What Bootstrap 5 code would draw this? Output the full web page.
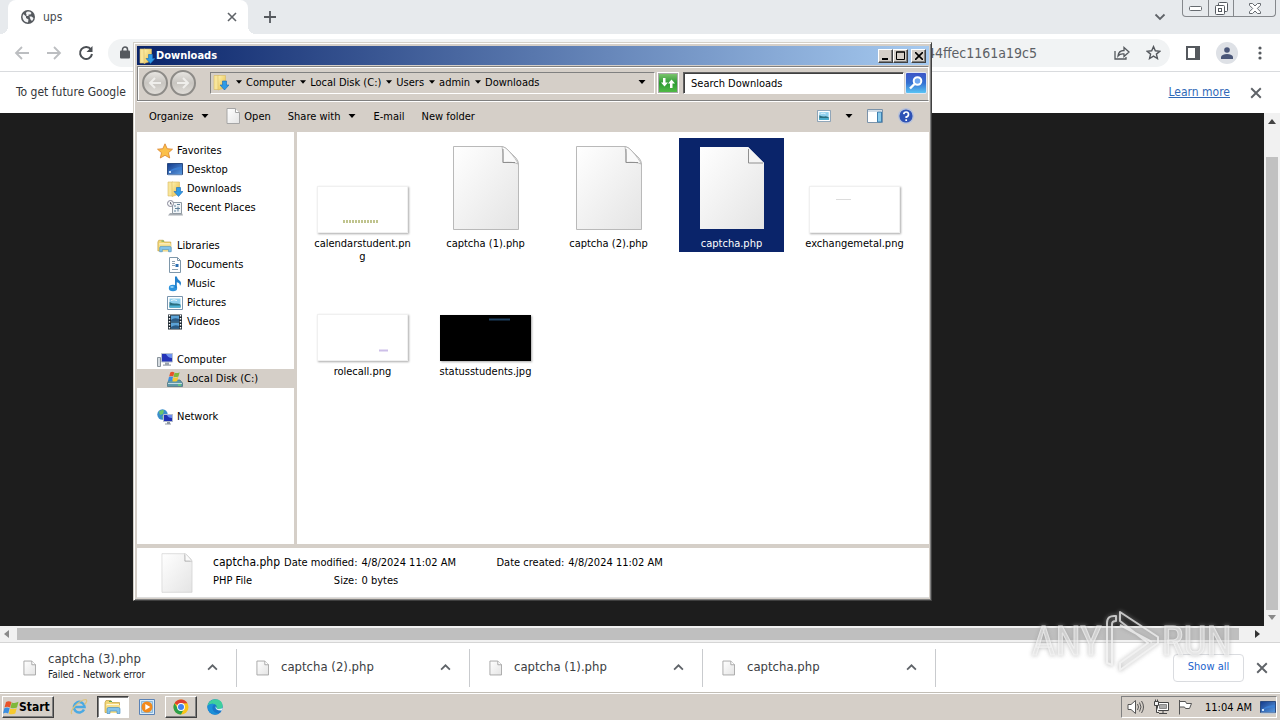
<!DOCTYPE html>
<html lang="en">
<head>
<meta charset="utf-8">
<meta name="viewport" content="width=device-width, initial-scale=1">
<title>Downloads</title>
<link rel="stylesheet" href="https://cdn.jsdelivr.net/npm/bootstrap@5.3.0/dist/css/bootstrap.min.css">
<style>
  :root { --face: #d5cfc8; --navy: #0a246a; --ink: #5f6368; }
  body { font-family: "DejaVu Sans Condensed", "Open Sans", sans-serif; font-size: 11px; line-height: 13px; color: #000; height: 100vh; overflow: hidden; }
  button { font: inherit; color: inherit; background: none; border: 0; padding: 0; }
  svg { display: block; flex: none; }
  ul { list-style: none; margin: 0; padding: 0; }

  /* browser */
  .tabstrip { height: 34px; background: #e7eaed; padding-left: 8px; }
  .tab { width: 240px; background: #fff; border-radius: 8px 8px 0 0; padding: 0 11px 0 13px; color: #45494d; font-size: 12px; position: relative; }
  .tab::before, .tab::after { content: ""; position: absolute; bottom: 0; width: 8px; height: 8px; }
  .tab::before { left: -8px; background: radial-gradient(circle at 0 0, transparent 8px, #fff 8px); }
  .tab::after { right: -8px; background: radial-gradient(circle at 100% 0, transparent 8px, #fff 8px); }
  .winbtns { height: 17px; margin-right: 4px; border: 1px solid #85888c; border-top: 0; border-radius: 0 0 4px 4px; }
  .winbtns button { width: 25px; display: grid; place-items: center; }
  .winbtns button + button { border-left: 1px solid #85888c; }
  .winbtns button:last-child { width: 42px; }
  .toolbar { height: 38px; background: #fff; border-bottom: 1px solid #d9dbde; padding: 0 14px; }
  .omnibox { height: 28px; border-radius: 14px; background: #f1f3f4; padding: 0 9px 0 12px; margin-left: 14px; }
  .url { font-size: 14px; color: #5c6065; line-height: 18px; margin: 0 77px 0 auto; }
  .avatar { width: 22px; height: 22px; border-radius: 50%; background: #dee1e6; display: grid; place-items: center; }
  .infobar { height: 41px; padding: 0 18px 0 16px; font-size: 12px; color: #333639; background: #fff; }
  .infobar a { color: #3069b8; }
  .page { background: #1d1d1d; }
  .vbar { width: 16px; background: #f1f1f1; padding: 6px 2px 6px; }
  .vthumb { flex: 1; background: #c1c1c1; margin: 33px 0 5px; align-self: stretch; }
  .hbar { height: 17px; background: #f1f1f1; border-bottom: 1px solid #d5d5d5; padding: 2px 20px 2px 4px; }
  .hthumb { flex: 1; background: #bfbfbf; height: 12px; }
  .shelf { height: 49px; background: #fff; color: #3c4043; }
  .dl { width: 233px; height: 38px; padding: 0 18px 0 19px; border-right: 1px solid #c9cbce; font-size: 13px; line-height: 16px; }
  .dl:first-child { width: 237px; padding-left: 23px; }
  .dl small { font-size: 10px; line-height: 14px; color: #202124; display: block; margin-top: 1px; }
  .dl > div { padding-bottom: 2px; }
  .showall { width: 71px; height: 28px; border: 1px solid #dadce0; border-radius: 4px; color: #1a62cc; padding-bottom: 2px; }

  /* taskbar */
  .taskbar { height: 28px; background: var(--face); border-top: 1px solid #c2beb6; box-shadow: inset 0 1px #fff; padding: 3px 3px 2px 2px; }
  .raised { border: 1px solid; border-color: #fff #404040 #404040 #fff; box-shadow: inset -1px -1px #808080; background: var(--face); }
  .sunken { border: 1px solid; border-color: #808080 #fff #fff #808080; }
  .start { width: 52px; font-weight: bold; font-size: 12px; }
  .task { width: 32px; display: grid; place-items: center; }
  .task.flat { width: 36px; }
  .start + .flat { margin-left: 7px; }
  .task.active { background: #fff; border-color: #404040 #fff #fff #404040; box-shadow: inset 1px 1px #808080; }
  .tray { padding: 0 0 0 5px; }

  /* explorer window */
  .explorer { position: absolute; left: 133px; top: 42px; width: 799px; height: 559px; background: var(--face); border: 1px solid; border-color: #d4d0c8 #404040 #404040 #d4d0c8; box-shadow: inset 1px 1px #fff, inset -1px -1px #808080; padding: 3px 2px 2px 3px; }
  .titlebar { height: 19px; background: linear-gradient(90deg, #0a246a, #a6caf0); color: #fff; font-weight: bold; padding: 0 3px 0 2px; gap: 1px; }
  .capt { width: 15px; height: 14px; display: grid; place-items: center; }
  .capt.shut { margin-left: 3px; }
  .navband { height: 35px; border: 1px solid; border-color: #808080 #fff #808080 #808080; margin-top: 1px; padding: 0 1px 1px 4px; box-shadow: inset 1px 1px #fff, 0 1px #fff; }
  .round { width: 26px; height: 26px; border-radius: 50%; border: 2px solid #8d8b87; background: linear-gradient(#e6e4e0, #c8c5c0 50%, #e0ddd8); display: grid; place-items: center; }
  .round + .round { margin-left: 2px; }
  .address { height: 22px; margin: 0 2px 0 14px; padding: 0 0 2px 2px; }
  .arrowbox { width: 15px; display: grid; place-items: center; }
  .address .arrowbox:first-of-type { margin-left: 2px; }
  .gobtn { width: 22px; height: 22px; border: 1px solid #fff; outline: 1px solid #aaa; outline-offset: -2px; background: linear-gradient(#83c873, #2c9a32 50%, #55bd48); display: grid; place-items: center; }
  .search { width: 221px; height: 22px; border: 1px solid; border-color: #606060 #fff #fff #606060; box-shadow: inset 1px 1px #404040; padding: 0 7px; margin: 0 1px 0 4px; background: #fff; border-radius: 0; font: inherit; outline: 0; }
  .search::placeholder { color: #000; opacity: 1; }
  .findbtn { width: 22px; height: 22px; border: 1px solid #e0e6f2; border-radius: 2px; background: linear-gradient(#3d55c6, #3470d2 50%, #5ac4f4); display: grid; place-items: center; }
  .cmdbar { height: 30px; padding: 0 15px 2px 12px; margin-top: 1px; gap: 17px; }
  .cmdtools { gap: 15px; }
  .viewtools { gap: 14px; margin-right: -1px; }
  .places { width: 157px; flex: none; background: #fff; padding-top: 9px; white-space: nowrap; }
  .places li { height: 19px; }
  .places a, .places a:hover { color: #000; text-decoration: none; height: 19px; gap: 4px; padding-left: 20px; }
  .places a.sub { padding-left: 30px; }
  .places a.current { background: var(--face); }
  .places ul { margin-bottom: 19px; }
  .files { background: #fff; margin-left: 3px; padding: 6px 13px; display: grid; grid-template-columns: repeat(auto-fill, 105px); grid-auto-rows: 128px; column-gap: 18px; }
  .file { min-height: 114px; padding: 0 3px 2px; text-align: center; align-self: start; word-break: break-all; }
  .file.selected { background: var(--navy); color: #fff; }
  .pic { height: 99px; padding-bottom: 6px; }
  .thumb { width: 91px; height: 47px; background: #fff; border: 1px solid #f0f0f0; box-shadow: 1px 1px 2px #aaa; margin-bottom: -2px; }
  .thumb.dark { background: #000; border-color: #000; height: 46px; }
  .details { height: 50px; background: #fff; border-bottom: 1px solid #ddd; margin-top: 4px; padding: 5px 24px; }
  .props th { font-weight: normal; text-align: right; }
  .props td, .props th { padding: 0 4px 0 0; height: 18px; vertical-align: middle; white-space: nowrap; }
  .props .name { font-size: 12px; }
  .props .val { width: 135px; }

  .watermark { position: absolute; right: 48px; bottom: 47px; pointer-events: none; opacity: .8; color: rgba(240,240,240,.6); font: 41px/38px "Roboto Condensed", "Open Sans Condensed", Roboto, sans-serif; -webkit-text-stroke: 1px #eee; filter: drop-shadow(0 0 2px #999); }
</style>
</head>
<body class="d-flex flex-column position-relative">

<svg width="0" height="0" class="position-absolute" aria-hidden="true">
  <defs>
    <linearGradient id="paper" x1="0" y1="0" x2="1" y2="1"><stop offset="0" stop-color="#fff"/><stop offset="1" stop-color="#e4e4e4"/></linearGradient>
    <linearGradient id="gold" x1="0" y1="0" x2="1" y2="1"><stop offset="0" stop-color="#fdf2b0"/><stop offset="1" stop-color="#e6b93f"/></linearGradient>
    <linearGradient id="sky" x1="0" y1="0" x2="1" y2="1"><stop offset="0" stop-color="#123a8c"/><stop offset="1" stop-color="#5b9be0"/></linearGradient>
  </defs>
  <symbol id="i-down" viewBox="0 0 7 4"><path d="M0 0h7L3.500 4z" fill="#000"/></symbol>
  <symbol id="i-close" viewBox="0 0 10 10"><path d="M1 1l8 8M9 1L1 9" stroke="#5f6368" stroke-width="1.600"/></symbol>
  <symbol id="i-up" viewBox="0 0 10 6"><path d="M1 5l4-4 4 4" fill="none" stroke="#5f6368" stroke-width="1.600"/></symbol>
  <symbol id="i-page" viewBox="0 0 68 86"><path d="M1.500 1.500H50Q53 2 56 5L64 13Q66.500 16 66.500 19v65.500h-65z" fill="url(#paper)" stroke="#b9b9b9"/><path d="M50 1.500Q51.500 8 51 17.500Q61 16.500 66 19Q65 15 56 5Q53 2 50 1.500Z" fill="#fafafa" stroke="#b0b0b0" stroke-width=".8"/><path d="M51 4v13.500h12" fill="none" stroke="#8f8f8f"/></symbol>
  <symbol id="i-page-sel" viewBox="0 0 68 86"><path d="M2 2H50L66 18v66H2z" fill="url(#paper)"/><path d="M50 2v16h16z" fill="#f4f4f4"/><path d="M50.500 4v14H65" fill="none" stroke="#8f8f8f"/></symbol>
  <symbol id="i-sheet" viewBox="0 0 14 16"><path d="M1 .5h8.500l4 4v11H1z" fill="url(#paper)" stroke="#a5a5a5"/><path d="M9.500.5v4h4" fill="#fff" stroke="#a5a5a5"/></symbol>
  <symbol id="i-dlfolder" viewBox="0 0 16 16"><path d="M1 1h5v14H1z" fill="#f8e59a" stroke="#d9bb62" stroke-width=".6"/><path d="M5 1h7.500v12L5 15.500z" fill="url(#gold)" stroke="#d9bb62" stroke-width=".6"/><path d="M9.500 6.500h4V10.500H16l-4.500 5-4.500-5h2.500z" fill="#2f9be6" stroke="#1769b8" stroke-width=".6"/></symbol>
  <symbol id="i-library" viewBox="0 0 18 16"><path d="M1 3.500l1-2h5l1 2h7.500v10H1z" fill="#f2d675" stroke="#bf9b3e" stroke-width=".7"/><path d="M2.500 5h12.500v2H2.500z" fill="#fff8d8"/><path d="M2.500 6h13.500v5l-2 3H2.500z" fill="#f6df8c"/><path d="M3 14.500V10q0-1.500 1.500-1.500h10Q16 8.500 16 10v4.500h-3V12H6v2.500z" fill="#83c3ea" stroke="#3987bd" stroke-width=".6"/><path d="M5 2.500h3" stroke="#5ca753"/></symbol>
  <symbol id="i-picture" viewBox="0 0 16 14"><path d="M.5.500h15v13H.5z" fill="#fff" stroke="#7995ae"/><path d="M2.500 2.500h11v9h-11z" fill="#8fd0ee"/><path d="M2.500 6q4 2 6 1.500t5 1v3h-11z" fill="#2a6f80"/><path d="M2.500 9.500h11v2h-11z" fill="#4cb4d7"/><path d="M4 4.500q3-1.500 6 0" stroke="#e9f7fd" fill="none"/></symbol>
  <symbol id="i-screen" viewBox="0 0 16 13"><path d="M.5.500h15v11H.5z" fill="url(#sky)" stroke="#2b4b80"/><path d="M1 9q6-5 14-5v3q-8-1-13 3z" fill="#3c7ed2"/><path d="M1 11.500h14v1H1z" fill="#a9c7e8"/><path d="M2 8h2v2H2z" fill="#cde4fb"/></symbol>
  <symbol id="i-flag4" viewBox="0 0 16 14"><path d="M3 1.500Q5.500 0 8.500 1.500L7 7Q4 5.500 1.500 7z" fill="#e8532a"/><path d="M8.800 1.900Q12 3.200 15.500 1.300L14 7Q10.500 8.500 7.400 7.200z" fill="#7fb83c"/><path d="M1.300 7.700Q4 6.500 6.700 7.700L5.200 13Q2.500 11.700 0 13z" fill="#3b8ee0"/><path d="M7.200 8Q10.500 9.300 13.700 7.800L12.300 13Q9 14.500 5.800 13.200z" fill="#f6c92f"/></symbol>
</svg>

<header>
  <div class="tabstrip d-flex">
    <div class="tab d-flex align-items-center">
      <svg width="14" height="14" viewBox="0 0 14 14"><circle cx="7" cy="7" r="7" fill="#55595e"/><path d="M1.500 7Q1.500 5.500 2.500 4L5 6.500V8l2.500 1.500L7 12.500Q2 12 1.500 7zM6 1.700Q9 1.300 10.500 3l-1 1.500H7.500V6H5.500V4.500L4.800 3zM8.500 6.500h2L12.500 8Q12 10 11 11L9.500 9.500z" fill="#f3f4f6"/></svg>
      <span class="ms-2">ups</span>
      <button class="ms-auto" aria-label="Close tab"><svg width="10" height="10"><use href="#i-close"/></svg></button>
    </div>
    <button class="ms-3" aria-label="New tab"><svg width="12" height="12" viewBox="0 0 12 12"><path d="M6 0v12M0 6h12" stroke="#55595e" stroke-width="1.800"/></svg></button>
    <button class="ms-auto me-3" aria-label="Search tabs"><svg width="12" height="8" viewBox="0 0 12 8"><path d="M1.500 1.500L6 6l4.500-4.500" fill="none" stroke="#5f6368" stroke-width="1.800"/></svg></button>
    <div class="winbtns d-flex">
      <button aria-label="Minimize"><svg width="13" height="5" viewBox="0 0 13 5"><rect x=".5" y=".5" width="12" height="4" rx="1" fill="#fff" stroke="#666b70"/></svg></button>
      <button aria-label="Restore"><svg width="13" height="13" viewBox="0 0 13 13" fill="#fff" stroke="#555a60"><rect x="3.500" y=".5" width="9" height="9" rx="1"/><rect x=".5" y="3.500" width="9" height="9" rx="1"/><rect x="3.500" y="6.500" width="3" height="3"/></svg></button>
      <button aria-label="Close"><svg width="12" height="11" viewBox="0 0 12 11"><path d="M.5.500h3L6 3 8.500.5h3v1.800L8.300 5.500l3.200 3.200v1.800h-3L6 8l-2.500 2.500h-3V8.700L3.700 5.500.5 2.300z" fill="#fff" stroke="#666b70"/></svg></button>
    </div>
  </div>
  <div class="toolbar d-flex align-items-center">
    <button aria-label="Back"><svg width="16" height="14" viewBox="0 0 16 14"><path d="M15 7H2M8 1L2 7l6 6" fill="none" stroke="#bcbec1" stroke-width="1.800"/></svg></button>
    <button class="ms-3" aria-label="Forward"><svg width="16" height="14" viewBox="0 0 16 14"><path d="M1 7h13M8 1l6 6-6 6" fill="none" stroke="#bcbec1" stroke-width="1.800"/></svg></button>
    <button class="ms-3" aria-label="Reload"><svg width="16" height="16" viewBox="0 0 16 16"><path d="M13 4.500A6 6 0 1 0 14 9" fill="none" stroke="#4b4f54" stroke-width="2"/><path d="M14.500 1v6h-6z" fill="#4b4f54"/></svg></button>
    <div class="omnibox d-flex align-items-center flex-grow-1">
      <svg width="10" height="13" viewBox="0 0 10 13"><rect y="4.500" width="10" height="8" rx="1" fill="#55595e"/><path d="M2.500 5V3.500a2.500 2.500 0 0 1 5 0V5" fill="none" stroke="#55595e" stroke-width="1.500"/></svg>
      <span class="url">44ffec1161a19c5</span>
      <button class="me-3" aria-label="Share"><svg width="16" height="14" viewBox="0 0 16 14" fill="none" stroke="#55595e" stroke-width="1.300"><path d="M1 5v8h11v-2"/><path d="M4 10q.5-5.500 6-5.500V1.500L15 6l-5 4.500V8Q6 7.500 4 10z"/></svg></button>
      <button aria-label="Bookmark"><svg width="15" height="15" viewBox="0 0 14 14"><path d="M7 1.500l1.700 3.900 4.200.4-3.200 2.700 1 4.100L7 10.400l-3.700 2.200 1-4.100L1.100 5.800l4.200-.4z" fill="none" stroke="#55595e" stroke-width="1.300"/></svg></button>
    </div>
    <button class="ms-3" aria-label="Side panel"><svg width="14" height="14" viewBox="0 0 14 14"><path d="M1 1h12v12H1z" fill="#fff" stroke="#55595e" stroke-width="2"/><path d="M9 1h4v12H9z" fill="#55595e"/></svg></button>
    <button class="avatar ms-3 me-3" aria-label="Profile"><svg width="12" height="12" viewBox="0 0 12 12" fill="#4a5678"><circle cx="6" cy="3" r="2.800"/><path d="M0 12V9.500Q1.500 7 6 7t6 2.500V12z"/></svg></button>
    <button class="ms-1" aria-label="Menu"><svg width="4" height="14" viewBox="0 0 4 14" fill="#55595e"><circle cx="2" cy="2" r="1.600"/><circle cx="2" cy="7" r="1.600"/><circle cx="2" cy="12" r="1.600"/></svg></button>
    <span class="ps-1"></span>
  </div>
  <div class="infobar d-flex align-items-center">
    <span>To get future Google</span>
    <a href="#" class="ms-auto">Learn more</a>
    <button class="ms-3 ps-1" aria-label="Dismiss"><svg width="12" height="12"><use href="#i-close"/></svg></button>
  </div>
</header>

<main class="page d-flex flex-grow-1 justify-content-end">
  <div class="vbar d-flex flex-column align-items-center">
    <svg width="8" height="5" viewBox="0 0 8 5"><path d="M0 5l4-5 4 5z" fill="#444"/></svg>
    <div class="vthumb"></div>
    <svg width="8" height="5" viewBox="0 0 8 5"><path d="M0 0h8L4 5z" fill="#8a8a8a"/></svg>
  </div>
</main>
<div class="hbar d-flex align-items-center">
  <svg class="me-2" width="5" height="8" viewBox="0 0 5 8"><path d="M5 0v8L0 4z" fill="#8a8a8a"/></svg>
  <div class="hthumb"></div>
  <svg class="ms-3" width="5" height="8" viewBox="0 0 5 8"><path d="M0 0v8l5-4z" fill="#333"/></svg>
</div>

<section class="shelf d-flex align-items-center" aria-label="Downloads">
  <div class="dl d-flex align-items-center"><svg width="13" height="16"><use href="#i-sheet"/></svg><div class="ms-2 ps-1">captcha (3).php<small>Failed - Network error</small></div><button class="ms-auto" aria-label="Options"><svg width="11" height="7"><use href="#i-up"/></svg></button></div>
  <div class="dl d-flex align-items-center"><svg width="13" height="16"><use href="#i-sheet"/></svg><div class="ms-2 ps-1">captcha (2).php</div><button class="ms-auto" aria-label="Options"><svg width="11" height="7"><use href="#i-up"/></svg></button></div>
  <div class="dl d-flex align-items-center"><svg width="13" height="16"><use href="#i-sheet"/></svg><div class="ms-2 ps-1">captcha (1).php</div><button class="ms-auto" aria-label="Options"><svg width="11" height="7"><use href="#i-up"/></svg></button></div>
  <div class="dl d-flex align-items-center"><svg width="13" height="16"><use href="#i-sheet"/></svg><div class="ms-2 ps-1">captcha.php</div><button class="ms-auto" aria-label="Options"><svg width="11" height="7"><use href="#i-up"/></svg></button></div>
  <button class="showall ms-auto">Show all</button>
  <button class="mx-2 px-1" aria-label="Close shelf"><svg width="12" height="12"><use href="#i-close"/></svg></button>
</section>

<footer class="taskbar d-flex">
  <button class="start raised d-flex align-items-center"><svg width="16" height="15"><use href="#i-flag4"/></svg>Start</button>
  <button class="task flat" aria-label="Internet Explorer"><svg width="18" height="18" viewBox="0 0 18 18"><path d="M14 11.500A5.300 5.300 0 1 1 14.500 9H5" fill="none" stroke="#4aa9e3" stroke-width="2.600"/><path d="M2 16Q-.5 14 5 8T16 1.500Q18 3 14.500 6.500" fill="none" stroke="#dcc27a" stroke-width="1.200"/></svg></button>
  <button class="task raised active" aria-label="Explorer"><svg width="18" height="16"><use href="#i-library"/></svg></button>
  <button class="task flat" aria-label="Media Player"><svg width="16" height="16" viewBox="0 0 16 16"><path d="M.5.500h15v15H.5z" fill="#d9ecfa" stroke="#5a82b6"/><path d="M2.500 2.500h11v11h-11z" fill="#b6d8f0" stroke="#8bb8da"/><circle cx="8" cy="8" r="5.500" fill="#f28a1c"/><path d="M6.300 5l5 3-5 3z" fill="#fff"/></svg></button>
  <button class="task raised" aria-label="Chrome"><svg width="16" height="16" viewBox="0 0 16 16"><circle cx="8" cy="8" r="7.500" fill="#f9c518"/><path d="M8 8L1.500 4.200A7.500 7.500 0 0 1 14.500 4.300L8 4.500z" fill="#dd3f31"/><path d="M1.500 4.200A7.500 7.500 0 0 0 8 15.500L11 9.800 5 9.800z" fill="#2c9f4b"/><circle cx="8" cy="8" r="3.900" fill="#fff"/><circle cx="8" cy="8" r="3" fill="#4283ef"/></svg></button>
  <button class="task flat" aria-label="Edge"><svg width="16" height="16" viewBox="0 0 16 16"><circle cx="8" cy="8" r="7.700" fill="#1976c9"/><path d="M.5 7Q2 .3 8.500.3 15.500.8 15.700 7 15.500 10 12 10.300 9 10.500 9.500 8.500 10.300 6.500 8 5.200 4 3.500.5 7z" fill="#3ecf9e"/><path d="M.5 7Q4 3.500 8 5.200 5 6 5.500 10 6.500 14 12 14.500 7 17 3 13.500.2 11 .5 7z" fill="#1b90d8"/><path d="M8.500 7.200Q8 12 15 11.500l.6-2.500Q13 10.500 10 9.800z" fill="#e4f2f8"/></svg></button>
  <div class="tray sunken d-flex align-items-center ms-auto">
    <svg width="18" height="16" viewBox="0 0 18 16" fill="none" stroke="#555"><path d="M1 5.500h3L8.500 1.500v13L4 10.500H1z" fill="#fff"/><path d="M10.500 5q2 3 0 6M12.500 3.500q3 4.500 0 9M14.500 2q4 6 0 12"/></svg>
    <svg class="ms-2" width="16" height="16" viewBox="0 0 16 16" fill="#f4f4f4" stroke="#444"><path d="M4.500 3.500h11v8h-11z" fill="#fff"/><path d="M6.500 5.500h7v4h-7z" fill="#aaa" stroke="#888"/><path d="M6 14.500h8M10 12v2M1.500 2.500h4v4h-4zM3.500 7v6.500H6M2.500.5v2M4.500.5v2"/></svg>
    <svg class="ms-2" width="16" height="16" viewBox="0 0 16 16" fill="#fff" stroke="#555"><path d="M2.500 1v14.500M2.500 2.500h6l1 2h5l-2 5h-4l-1-1.500h-5z"/></svg>
    <time class="ms-2 ps-1 me-2">11:04 AM</time>
    <svg width="16" height="13"><use href="#i-screen"/></svg>
  </div>
</footer>

<section class="explorer d-flex flex-column" aria-label="Downloads window">
  <div class="titlebar d-flex align-items-center">
    <svg width="16" height="16"><use href="#i-dlfolder"/></svg><span>Downloads</span>
    <div class="d-flex ms-auto">
      <button class="capt raised" aria-label="Minimize"><svg width="8" height="8"><path d="M0 6h6v2H0z"/></svg></button>
      <button class="capt raised" aria-label="Maximize"><svg width="9" height="9"><path d="M.5 1h8v7.500h-8z M0 1h9" fill="none" stroke="#000"/></svg></button>
      <button class="capt shut raised" aria-label="Close"><svg width="8" height="8" viewBox="0 0 8 8"><path d="M0 0l8 8M8 0L0 8" stroke="#000" stroke-width="1.600"/></svg></button>
    </div>
  </div>
  <div class="navband d-flex align-items-center">
    <button class="round" aria-label="Back"><svg width="14" height="12" viewBox="0 0 14 12"><path d="M13 6H2M7 1L2 6l5 5" fill="none" stroke="#efeeeb" stroke-width="2"/></svg></button>
    <button class="round" aria-label="Forward"><svg width="14" height="12" viewBox="0 0 14 12"><path d="M1 6h11M7 1l5 5-5 5" fill="none" stroke="#efeeeb" stroke-width="2"/></svg></button>
    <nav class="address sunken d-flex align-items-center flex-grow-1" aria-label="Path">
      <svg width="16" height="17"><use href="#i-dlfolder"/></svg>
      <span class="arrowbox"><svg width="6" height="4"><use href="#i-down"/></svg></span><button>Computer</button>
      <span class="arrowbox"><svg width="6" height="4"><use href="#i-down"/></svg></span><button>Local Disk (C:)</button>
      <span class="arrowbox"><svg width="6" height="4"><use href="#i-down"/></svg></span><button>Users</button>
      <span class="arrowbox"><svg width="6" height="4"><use href="#i-down"/></svg></span><button>admin</button>
      <span class="arrowbox"><svg width="6" height="4"><use href="#i-down"/></svg></span><button>Downloads</button>
      <button class="ms-auto me-2" aria-label="Previous locations"><svg width="8" height="4"><use href="#i-down"/></svg></button>
    </nav>
    <button class="gobtn" aria-label="Refresh"><svg width="16" height="14" viewBox="0 0 16 14" fill="#fff"><path d="M3 2h2.500v4.500H8L4.500 10.500 1 6.500h2zM10 12h2.500V7.500H15L11.500 3.500 8 7.500h2z"/></svg></button>
    <input class="search" type="text" placeholder="Search Downloads" aria-label="Search Downloads">
    <button class="findbtn" aria-label="Search"><svg width="16" height="16" viewBox="0 0 16 16"><circle cx="9.500" cy="6" r="3.800" fill="#6ea5ee" stroke="#fff" stroke-width="2"/><path d="M6.500 9L2 13.500" stroke="#fff" stroke-width="2.400"/></svg></button>
  </div>
  <div class="cmdbar d-flex align-items-center">
    <button class="d-flex align-items-center">Organize<svg class="ms-2" width="8" height="4"><use href="#i-down"/></svg></button>
    <button class="d-flex align-items-center"><svg class="me-1" width="14" height="16"><use href="#i-sheet"/></svg>Open</button>
    <button class="d-flex align-items-center">Share with<svg class="ms-2" width="8" height="4"><use href="#i-down"/></svg></button>
    <button>E-mail</button>
    <button>New folder</button>
    <div class="cmdtools d-flex align-items-center ms-auto">
      <button class="viewtools d-flex align-items-center" aria-label="View"><svg width="14" height="12"><use href="#i-picture"/></svg><svg width="8" height="4"><use href="#i-down"/></svg></button>
      <button aria-label="Preview pane"><svg width="16" height="14" viewBox="0 0 16 14"><path d="M.5.500h15v13H.5z" fill="#fff" stroke="#7b93aa"/><path d="M10.500 3h4v10h-4z" fill="#8acbea" stroke="#3f7fae"/><path d="M1 2h14" stroke="#a8bccf"/></svg></button>
      <button aria-label="Help"><svg width="16" height="16" viewBox="0 0 16 16"><circle cx="8" cy="8" r="7.300" fill="#2e52b5" stroke="#b9c3da" stroke-width="1.400"/><path d="M5.800 6.200Q6 4 8.200 4T10.500 6.200 8.200 9v1M8.200 11.200V13" fill="none" stroke="#fff" stroke-width="1.700"/></svg></button>
    </div>
  </div>
  <div class="d-flex flex-grow-1">
    <nav class="places" aria-label="Places">
      <ul>
        <li><a href="#" class="d-flex align-items-center"><svg width="16" height="16" viewBox="0 0 16 16"><path d="M8 .8l2.200 4.900 5.300.5-4 3.500 1.200 5.300L8 12.300 3.300 15l1.200-5.300-4-3.500 5.300-.5z" fill="#fbc04a" stroke="#d9822b" stroke-width=".8"/></svg>Favorites</a></li>
        <li><a href="#" class="sub d-flex align-items-center"><svg width="16" height="13"><use href="#i-screen"/></svg>Desktop</a></li>
        <li><a href="#" class="sub d-flex align-items-center"><svg width="16" height="16"><use href="#i-dlfolder"/></svg>Downloads</a></li>
        <li><a href="#" class="sub d-flex align-items-center"><svg width="16" height="16" viewBox="0 0 16 16"><path d="M3 13h12l1 2.500H1z" fill="#a8adb3"/><path d="M5.500 2.500h9v11h-9z" fill="#f0f4f7" stroke="#909aa3"/><path d="M7 6h2M10 4.500h3M8 8.500h5M7 11h2M11 6.500v5" stroke="#62839c"/><circle cx="3.500" cy="3.500" r="3" fill="#f5f7f8" stroke="#889"/><path d="M3.500 2v2H5" stroke="#556" fill="none" stroke-width=".8"/></svg>Recent Places</a></li>
      </ul>
      <ul>
        <li><a href="#" class="d-flex align-items-center"><svg width="16" height="16"><use href="#i-library"/></svg>Libraries</a></li>
        <li><a href="#" class="sub d-flex align-items-center"><svg width="16" height="16" viewBox="0 0 16 16"><path d="M2.500.5h8l3 3v12h-11z" fill="#fff" stroke="#7e97aa"/><path d="M10.500.5v3h3" fill="none" stroke="#7e97aa"/><path d="M5 4.500h3M5 6.500h3M5 8.500h3M5 12.500h6" stroke="#8fa3b2"/><path d="M8.500 7h3v3h-3z" fill="#2b6fb3"/></svg>Documents</a></li>
        <li><a href="#" class="sub d-flex align-items-center"><svg width="16" height="16" viewBox="0 0 16 16"><ellipse cx="6" cy="12" rx="4.200" ry="3.300" fill="#2c93dd"/><path d="M8 12V.5h1.800q.5 3 3.200 4.500 2 2 0 5 .2-3-3.200-3.800V12z" fill="#2380cc"/><ellipse cx="5" cy="11" rx="1.800" ry="1" fill="#8fd0f7"/></svg>Music</a></li>
        <li><a href="#" class="sub d-flex align-items-center"><svg width="16" height="14"><use href="#i-picture"/></svg>Pictures</a></li>
        <li><a href="#" class="sub d-flex align-items-center"><svg width="16" height="16" viewBox="0 0 16 16"><path d="M1 .5h14v15H1z" fill="#1f2a33"/><path d="M4 1.500h8v6H4zM4 8.500h8v6H4z" fill="#5ba2d6"/><path d="M4 6q3-3 8-1v2.500H4zM4 13q4-3 8-1v2.500H4z" fill="#2a5a84"/><path d="M2.500 1v15M13.500 1v15" stroke="#fff" stroke-width="1.400" stroke-dasharray="1.500 1.500"/></svg>Videos</a></li>
      </ul>
      <ul>
        <li><a href="#" class="d-flex align-items-center"><svg width="16" height="16" viewBox="0 0 16 16"><path d="M.5 5.500h3v9h-3z" fill="#d5dbe0" stroke="#8a949c"/><path d="M4.500 1.500h11v8.500h-11z" fill="#2434b8" stroke="#b8c2d0"/><path d="M9 2h6v4Q11 6 9 2z" fill="#6e92ef"/><path d="M8 10.500h4v2H8zM6 12.500h8v1.200H6z" fill="#9aa3ad"/></svg>Computer</a></li>
        <li><a href="#" class="sub current d-flex align-items-center"><svg width="16" height="16" viewBox="0 0 16 16"><path d="M2 9h11l2.500 3v3.500H.5V12z" fill="#5f98a8" stroke="#456f7c" stroke-width=".7"/><path d="M1 12.500h14" stroke="#c4dbe2"/><path d="M11 14h3" stroke="#6bf05c"/><use href="#i-flag4" x="1" y="0" width="12" height="11"/></svg>Local Disk (C:)</a></li>
      </ul>
      <ul>
        <li><a href="#" class="d-flex align-items-center"><svg width="16" height="16" viewBox="0 0 16 16"><circle cx="5.500" cy="5.500" r="5.200" fill="#3a8ecb"/><path d="M2 2.500Q5 0 7 1.500L6 5 3 6zM5 7l3 1-2 2.500z" fill="#6cc56b"/><path d="M6.500 5.500h9v7h-9z" fill="#2030b4" stroke="#b4bccb"/><path d="M10 6h5v3q-4 0-5-3z" fill="#6b8cee"/><path d="M10 13h3v1.500h-3zM8 14.500h6v1H8z" fill="#8d97a2"/></svg>Network</a></li>
      </ul>
    </nav>
    <div class="files flex-grow-1">
      <div class="file"><div class="pic d-flex align-items-end justify-content-center"><svg class="thumb"><path d="M25 34.500h35" stroke="#c0c48f" stroke-width="3" stroke-dasharray="2 1"/></svg></div>calendarstudent.png</div>
      <div class="file"><div class="pic d-flex align-items-end justify-content-center"><svg width="68" height="86"><use href="#i-page"/></svg></div>captcha (1).php</div>
      <div class="file"><div class="pic d-flex align-items-end justify-content-center"><svg width="68" height="86"><use href="#i-page"/></svg></div>captcha (2).php</div>
      <div class="file selected"><div class="pic d-flex align-items-end justify-content-center"><svg width="68" height="86"><use href="#i-page-sel"/></svg></div>captcha.php</div>
      <div class="file"><div class="pic d-flex align-items-end justify-content-center"><svg class="thumb"><path d="M26 12.500h15" stroke="#dcdcdc" stroke-width="1"/></svg></div>exchangemetal.png</div>
      <div class="file"><div class="pic d-flex align-items-end justify-content-center"><svg class="thumb"><path d="M61 35.500h9" stroke="#cdbfe8" stroke-width="2"/></svg></div>rolecall.png</div>
      <div class="file"><div class="pic d-flex align-items-end justify-content-center"><svg class="thumb dark"><path d="M48 3.500h21" stroke="#1d3f5e" stroke-width="2"/></svg></div>statusstudents.jpg</div>
    </div>
  </div>
  <div class="details d-flex">
    <svg class="me-3" width="32" height="40" viewBox="0 0 68 86"><use href="#i-page"/></svg>
    <table class="props align-self-start ms-1">
      <tr><td class="name">captcha.php</td><th>Date modified:</th><td class="val">4/8/2024 11:02 AM</td><th>Date created:</th><td>4/8/2024 11:02 AM</td></tr>
      <tr><td>PHP File</td><th>Size:</th><td class="val">0 bytes</td></tr>
    </table>
  </div>
</section>

<div class="watermark d-flex align-items-center"><span>ANY</span>
  <svg width="60" height="64" viewBox="0 0 56 64" fill="none" stroke="#eee" stroke-width="2"><path d="M12 7Q3 6 3 14v40l5 2V15q0-3 4-3zM16 3l38 25v6L16 61v-7l28-20L16 12zM16 16l32 17" stroke-linejoin="round"/></svg>
  <span>RUN</span></div>
<script src="https://cdn.jsdelivr.net/npm/bootstrap@5.3.0/dist/js/bootstrap.bundle.min.js"></script>
</body>
</html>
